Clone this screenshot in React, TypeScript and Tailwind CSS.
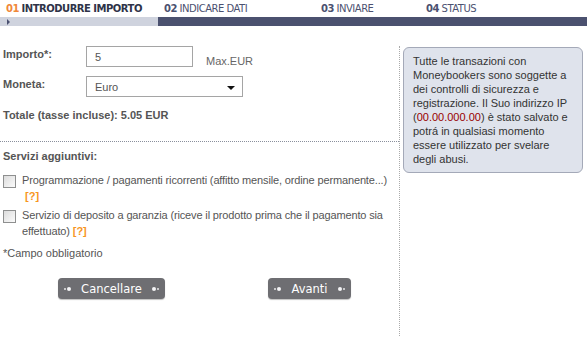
import React from "react";

const Dots = () => (
  <span className="inline-flex items-center gap-[1px]">
    <span className="w-[2px] h-[2px] rounded-full bg-[#e8e8ea]" />
    <span className="w-[4px] h-[4px] rounded-full bg-[#f4f4f6]" />
  </span>
);

const DotsR = () => (
  <span className="inline-flex items-center gap-[1px]">
    <span className="w-[4px] h-[4px] rounded-full bg-[#f4f4f6]" />
    <span className="w-[2px] h-[2px] rounded-full bg-[#e8e8ea]" />
  </span>
);

const Checkbox = () => (
  <span className="shrink-0 w-[13px] h-[13px] border border-[#8e8f8f] bg-gradient-to-br from-[#dcdcdc] to-[#fbfbfb] mt-[3px]" />
);

const Help = () => <span className="text-[#f7941d] font-bold tracking-normal">[?]</span>;

export default function App() {
  return (
    <div className="w-[587px] h-[340px] bg-white overflow-hidden font-['Liberation_Sans',Arial,sans-serif] text-[11px] text-[#555]">
      {/* steps */}
      <div className="flex h-[17px] items-center font-['DejaVu_Sans',Verdana,sans-serif] text-[10px] text-[#4b5170] tracking-[-0.5px]">
        <div className="w-[158px] pl-[6px]">
          <span className="font-bold text-[#f0883a]">01</span>{" "}
          <span className="font-bold text-[#2e3348]">INTRODURRE IMPORTO</span>
        </div>
        <div className="w-[157px] pl-[6px]">
          <span className="font-bold">02</span> INDICARE DATI
        </div>
        <div className="w-[105px] pl-[6px]">
          <span className="font-bold">03</span> INVIARE
        </div>
        <div className="pl-[6px]">
          <span className="font-bold">04</span> STATUS
        </div>
      </div>
      <div className="flex h-[9px]">
        <div className="w-[158px] bg-[#cfd3de] flex items-center pl-[7px]">
          <span className="w-0 h-0 border-y-[3px] border-y-transparent border-l-[3px] border-l-[#4b5170]" />
        </div>
        <div className="flex-1 bg-[#4b516f]" />
      </div>

      <div className="flex mt-[20px]">
        {/* left column */}
        <div className="w-[399px] leading-[14px]">
          <div className="flex h-[21px] pl-[3px]">
            <div className="w-[83px] pt-[1px] font-bold">Importo*:</div>
            <div className="w-[107px] h-[21px] border border-[#a5a5a5] pl-[8px] flex items-center">5</div>
            <div className="pl-[13px] pt-[8px] text-[#666]">Max.EUR</div>
          </div>
          <div className="flex h-[21px] pl-[3px] mt-[9px]">
            <div className="w-[83px] pt-[1px] font-bold">Moneta:</div>
            <div className="w-[157px] h-[21px] border border-[#a5a5a5] pl-[8px] pr-[7px] flex items-center justify-between">
              <span>Euro</span>
              <span className="w-0 h-0 border-x-[4px] border-x-transparent border-t-[4px] border-t-[#111] mt-[2px]" />
            </div>
          </div>
          <div className="pl-[3px] mt-[11px] font-bold">Totale (tasse incluse): 5.05 EUR</div>

          <div className="mt-[19px] border-t border-dotted border-[#8a8f9c]" />

          <div className="pl-[3px] mt-[7px] font-bold">Servizi aggiuntivi:</div>

          <div className="flex gap-[6px] pl-[3px] mt-[9px] leading-[16px] tracking-[-0.14px]">
            <Checkbox />
            <div>
              Programmazione / pagamenti ricorrenti (affitto mensile, ordine permanente...)
              <div className="pl-[3px]">
                <Help />
              </div>
            </div>
          </div>
          <div className="flex gap-[6px] pl-[3px] mt-[3px] leading-[16px] tracking-[-0.14px]">
            <Checkbox />
            <div>
              Servizio di deposito a garanzia (riceve il prodotto prima che il pagamento sia effettuato) <Help />
            </div>
          </div>

          <div className="pl-[3px] mt-[7px]">*Campo obbligatorio</div>

          <div className="flex mt-[18px] font-['DejaVu_Sans',Verdana,sans-serif] text-white">
            <button className="ml-[58px] w-[107px] h-[21px] rounded-[4px] bg-[#6e6e72] flex items-center justify-between px-[6px] shadow-[0_1px_1px_rgba(0,0,0,0.25)]">
              <Dots />
              <span className="text-[11.5px]">Cancellare</span>
              <DotsR />
            </button>
            <button className="ml-[103px] w-[83px] h-[21px] rounded-[4px] bg-[#6e6e72] flex items-center justify-between px-[6px] shadow-[0_1px_1px_rgba(0,0,0,0.25)]">
              <Dots />
              <span className="text-[11.5px]">Avanti</span>
              <DotsR />
            </button>
          </div>
        </div>

        {/* right column */}
        <div className="border-l border-dotted border-[#aaa] h-[290px] pl-[3px] pt-[1px]">
          <div className="w-[180px] rounded-[6px] border border-[#a4a9b8] bg-[#dfe3ec] px-[9px] pt-[6px] pb-[6px] leading-[14px] text-[#333]">
            Tutte le transazioni con Moneybookers sono soggette a dei controlli di sicurezza e registrazione. Il Suo indirizzo IP (
            <span className="text-[#990000]">00.00.000.00</span>) è stato salvato e potrá in qualsiasi momento essere utilizzato per svelare degli abusi.
          </div>
        </div>
      </div>
    </div>
  );
}
